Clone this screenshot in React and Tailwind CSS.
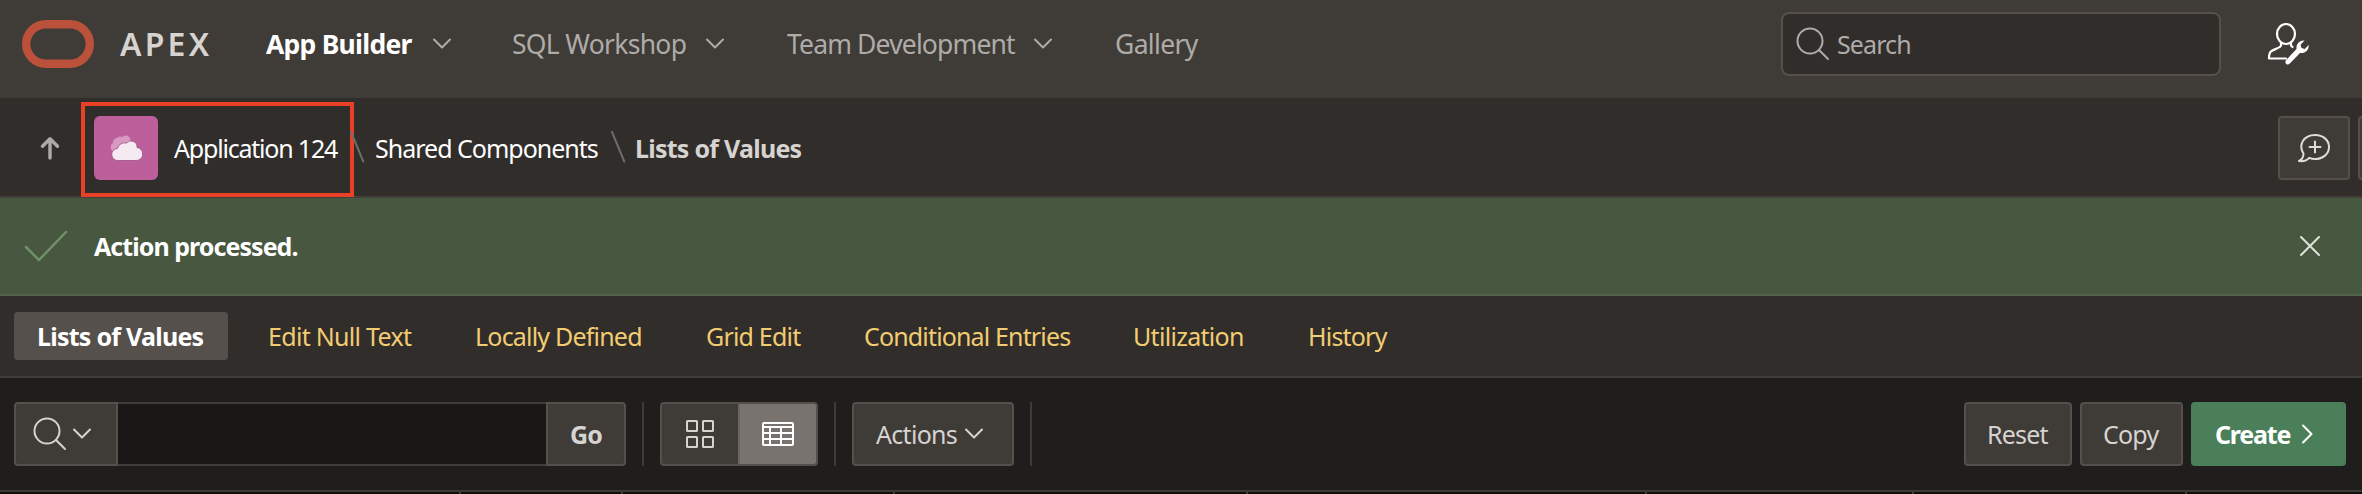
function Txt({ children, w, className }) {
  return (
    <span className="shrink-0 block whitespace-nowrap" style={{ width: w }}>
      <span className={className}>{children}</span>
    </span>
  );
}

function Chevron({ className }) {
  return (
    <svg className={className} width="20" height="12" viewBox="0 0 20 12" fill="none" stroke="currentColor" strokeWidth="2" strokeLinecap="round" strokeLinejoin="round">
      <path d="M2 1.5 10 9.5 18 1.5" />
    </svg>
  );
}

function Magnifier({ className }) {
  return (
    <svg className={className} width="34" height="34" viewBox="0 0 34 34" fill="none" stroke="currentColor" strokeWidth="2" strokeLinecap="round">
      <circle cx="14" cy="14" r="12.5" />
      <path d="M23 23 32 32" />
    </svg>
  );
}

function Slash() {
  return (
    <svg className="shrink-0 -mt-0.5" width="16" height="32" viewBox="0 0 16 32" fill="none" stroke="#6f6b67" strokeWidth="2" strokeLinecap="round">
      <path d="M2 1 14.3 30.5" />
    </svg>
  );
}

const separators = [459, 621, 893, 1246, 1645, 1912, 2185];

export default function App() {
  return (
    <div className="w-[2362px] h-[494px] overflow-hidden flex flex-col bg-[#201e1c] font-['Noto_Sans',sans-serif] text-[25px] leading-8 text-white">
      <header className="h-[98px] shrink-0 bg-[#3f3b37] flex items-start">
        <div className="h-[88px] w-full flex items-center">
          <svg className="ml-[22px] shrink-0" width="72" height="48" viewBox="0 0 72 48" fill="none" stroke="#bb503b" strokeWidth="8.4">
            <rect x="4.2" y="4.2" width="63.6" height="39.6" rx="19.8" />
          </svg>
          <div className="ml-[26px] w-[146px] shrink-0 font-semibold text-[32px] tracking-[3.2px] text-[#d6d3d0]">APEX</div>
          <nav className="flex items-center text-[26.5px] text-[#aeaba8]">
            <Txt w={166} className="font-bold text-white tracking-[-0.75px]">App Builder</Txt>
            <Chevron className="w-5 shrink-0 mr-[60px]" />
            <Txt w={193} className="tracking-[-0.7px]">SQL Workshop</Txt>
            <Chevron className="w-5 shrink-0 mr-[62px]" />
            <Txt w={246} className="tracking-[-0.85px]">Team Development</Txt>
            <Chevron className="w-5 shrink-0 mr-[62px]" />
            <Txt w={90} className="tracking-[-0.65px]">Gallery</Txt>
          </nav>
          <div className="ml-auto w-[440px] h-16 shrink-0 rounded-lg border-2 border-[#55504c] bg-[#312d2a] flex items-center pl-[13px] text-[#aeaba8]">
            <Magnifier className="shrink-0 mr-[7px]" />
            <Txt w={80} className="tracking-[-0.9px]">Search</Txt>
          </div>
          <svg className="ml-[45px] mr-[51px] shrink-0" width="45" height="44" viewBox="0 0 45 44" fill="none" stroke="#fff" strokeWidth="2.2" strokeLinecap="round" strokeLinejoin="round">
            <ellipse cx="20" cy="12" rx="9" ry="10" />
            <path d="M15 21v2.5c0 2-7 3.800-10 5.800C3 31 3 33 3 36.500h17" />
            <path d="M25 21v2.500l1.500 1.500" />
            <path fill="#fff" stroke="none" d="M38.500 18.500c-4.500-.5-8.500 3-8 8.500L20 38.200c-1 1.200-.8 2.800.3 3.700 1.100.9 2.500.7 3.500-.4L34 31c5.200.8 9-3 8.700-8l-3.900 3.900-3.300-.8-.9-3.300z" />
          </svg>
        </div>
      </header>

      <div className="h-[100px] shrink-0 bg-[#312d2a] border-b-2 border-[#433f3b] flex items-center pt-0.5">
        <svg className="ml-10 mr-[21px] shrink-0" width="20" height="24" viewBox="0 0 20 24" fill="none" stroke="#aeaba8" strokeWidth="3.400" strokeLinecap="round" strokeLinejoin="round">
          <path d="M10 22V3M2.500 10.200 10 2.700l7.500 7.500" />
        </svg>
        <div className="w-[273px] h-[95px] mt-[3px] shrink-0 border-4 border-[#ea4025] flex items-center pl-[9px] pb-[3px]">
          <div className="size-16 mr-4 shrink-0 rounded-md bg-[#bc5f9b] flex items-center justify-center">
            <svg width="32" height="28" viewBox="0 0 32 28">
              <path fill="#d89ac2" d="M4.500 18A5 5 0 0 1 3 9a5 5 0 0 1 4-5 4 4 0 0 1 5-1 5 5 0 0 1 8.500 3l-6 10z" />
              <path fill="#f5eaf1" stroke="#9c4c80" strokeWidth=".8" d="M8 26.500a6 6 0 0 1-.5-12 7.500 7.500 0 0 1 9-5.500 6 6 0 0 1 10.500 4.500 6.500 6.500 0 0 1-1.500 13z" />
            </svg>
          </div>
          <Txt w={164} className="tracking-[-1.2px]">Application 124</Txt>
        </div>
        <div className="ml-[-5px] flex items-center">
          <Slash />
          <Txt w={236} className="ml-[10px] tracking-[-1px]">Shared Components</Txt>
          <div className="w-[9px] shrink-0" />
          <Slash />
          <Txt w={180} className="ml-[9px] font-bold text-[#d6d3d0] tracking-[-0.75px]">Lists of Values</Txt>
        </div>
        <div className="ml-auto w-[84px] shrink-0 flex gap-2 overflow-hidden">
          <div className="w-[72px] h-16 shrink-0 rounded border-2 border-[#55504c] bg-[#3f3b37] flex items-center justify-center">
            <svg width="34" height="30" viewBox="0 0 34 30" fill="none" stroke="#dedbd8" strokeWidth="2" strokeLinecap="round" strokeLinejoin="round">
              <path d="M6.500 20.500C1 12 6.500 2 18 2c8 0 14 5 14 12s-6 12-14 12c-2.200 0-4-.4-5.800-1.100C10 27.500 6 28.500 2 28c3-1.500 4.500-4 4.500-7.500z" />
              <path d="M18 8.500v11M12.500 14h11" />
            </svg>
          </div>
          <div className="w-[72px] h-16 shrink-0 rounded border-2 border-[#55504c] bg-[#3f3b37]" />
        </div>
      </div>

      <div className="h-[98px] shrink-0 bg-[#485740] border-b-2 border-[#526649] flex items-center">
        <svg className="ml-6 mr-[26px] shrink-0" width="44" height="32" viewBox="0 0 44 32" fill="none" stroke="#6f9068" strokeWidth="2.500" strokeLinecap="round" strokeLinejoin="round">
          <path d="M2 17 15 30 42 2" />
        </svg>
        <Txt w={230} className="font-bold tracking-[-0.95px]">Action processed.</Txt>
        <svg className="ml-auto mr-[41px] shrink-0" width="22" height="22" viewBox="0 0 22 22" stroke="#dfe3dc" strokeWidth="2" strokeLinecap="round">
          <path d="M2 2 20 20M20 2 2 20" />
        </svg>
      </div>

      <div className="h-[82px] shrink-0 bg-[#312d2a] border-b-2 border-[#3f3b37] flex items-center pl-[14px] text-[#f1cc71]">
        <div className="w-[214px] h-12 shrink-0 rounded bg-[#55504c] flex items-center pl-[23px] mr-10 text-white">
          <Txt w={170} className="font-bold tracking-[-0.75px]">Lists of Values</Txt>
        </div>
        <Txt w={207} className="tracking-[-0.7px]">Edit Null Text</Txt>
        <Txt w={231} className="tracking-[-0.8px]">Locally Defined</Txt>
        <Txt w={158} className="tracking-[-0.8px]">Grid Edit</Txt>
        <Txt w={269} className="tracking-[-0.85px]">Conditional Entries</Txt>
        <Txt w={175} className="tracking-[-0.7px]">Utilization</Txt>
        <Txt w={90} className="tracking-[-0.8px]">History</Txt>
      </div>

      <div className="h-[114px] shrink-0 border-b-2 border-[#3f3b37] flex items-center pl-[14px] pr-4 text-[#d6d3d0]">
        <div className="w-[104px] h-16 shrink-0 rounded-l border-2 border-[#55504c] bg-[#3f3b37] flex items-center pl-[17px]">
          <Magnifier className="shrink-0" />
          <Chevron className="ml-[5px] shrink-0" />
        </div>
        <div className="w-[428px] h-16 shrink-0 border-y-2 border-[#3f3b37] bg-[#191715]" />
        <div className="w-20 h-16 shrink-0 rounded-r border-2 border-[#55504c] bg-[#3f3b37] flex items-center pl-[22px]">
          <Txt w={32} className="font-bold tracking-[-0.8px]">Go</Txt>
        </div>
        <div className="ml-4 w-0.5 h-16 shrink-0 bg-[#3f3b37]" />
        <div className="ml-4 w-[158px] h-16 shrink-0 rounded border-2 border-[#55504c] bg-[#3f3b37] flex overflow-hidden">
          <div className="w-[76px] h-full flex items-center justify-center">
            <svg width="30" height="30" viewBox="0 0 30 30" fill="none" stroke="#d6d3d0" strokeWidth="2">
              <rect x="2" y="2" width="10" height="10" rx=".5" />
              <rect x="18" y="2" width="10" height="10" rx=".5" />
              <rect x="2" y="18" width="10" height="10" rx=".5" />
              <rect x="18" y="18" width="10" height="10" rx=".5" />
            </svg>
          </div>
          <div className="flex-1 h-full border-l-2 border-[#6a6560] bg-[#78736e] flex items-center justify-center">
            <svg width="34" height="26" viewBox="0 0 34 26" fill="none" stroke="#fff" strokeWidth="2">
              <rect x="2" y="2" width="30" height="22" rx="1" />
              <path d="M2 6h30M2 12h30M2 18h30M9 6v18M20 6v18" />
            </svg>
          </div>
        </div>
        <div className="ml-4 w-0.5 h-16 shrink-0 bg-[#3f3b37]" />
        <div className="ml-4 w-[162px] h-16 shrink-0 rounded border-2 border-[#55504c] bg-[#3f3b37] flex items-center pl-[22px]">
          <Txt w={88} className="tracking-[-0.7px]">Actions</Txt>
          <Chevron className="shrink-0" />
        </div>
        <div className="ml-4 w-0.5 h-16 shrink-0 bg-[#3f3b37]" />
        <div className="ml-auto flex gap-2">
          <div className="w-[108px] h-16 rounded border-2 border-[#55504c] bg-[#3f3b37] flex items-center pl-[21px]">
            <Txt w={64} className="tracking-[-0.8px]">Reset</Txt>
          </div>
          <div className="w-[103px] h-16 rounded border-2 border-[#55504c] bg-[#3f3b37] flex items-center pl-[21px]">
            <Txt w={60} className="tracking-[-0.8px]">Copy</Txt>
          </div>
          <div className="w-[155px] h-16 rounded bg-[#4a7f59] flex items-center pl-6 text-white">
            <Txt w={86} className="font-bold tracking-[-1.2px]">Create</Txt>
            <svg className="shrink-0" width="12" height="20" viewBox="0 0 12 20" fill="none" stroke="currentColor" strokeWidth="2" strokeLinecap="round" strokeLinejoin="round">
              <path d="M2 1.500 10.500 10 2 18.500" />
            </svg>
          </div>
        </div>
      </div>

      <div className="h-0.5 shrink-0 bg-[#100e0d] flex">
        {separators.map((x, i) => (
          <div key={x} className="h-0.5 shrink-0 border-r-2 border-[#3f3b37]" style={{ width: x + 2 - (i ? separators[i - 1] + 2 : 0) }} />
        ))}
      </div>
    </div>
  );
}
